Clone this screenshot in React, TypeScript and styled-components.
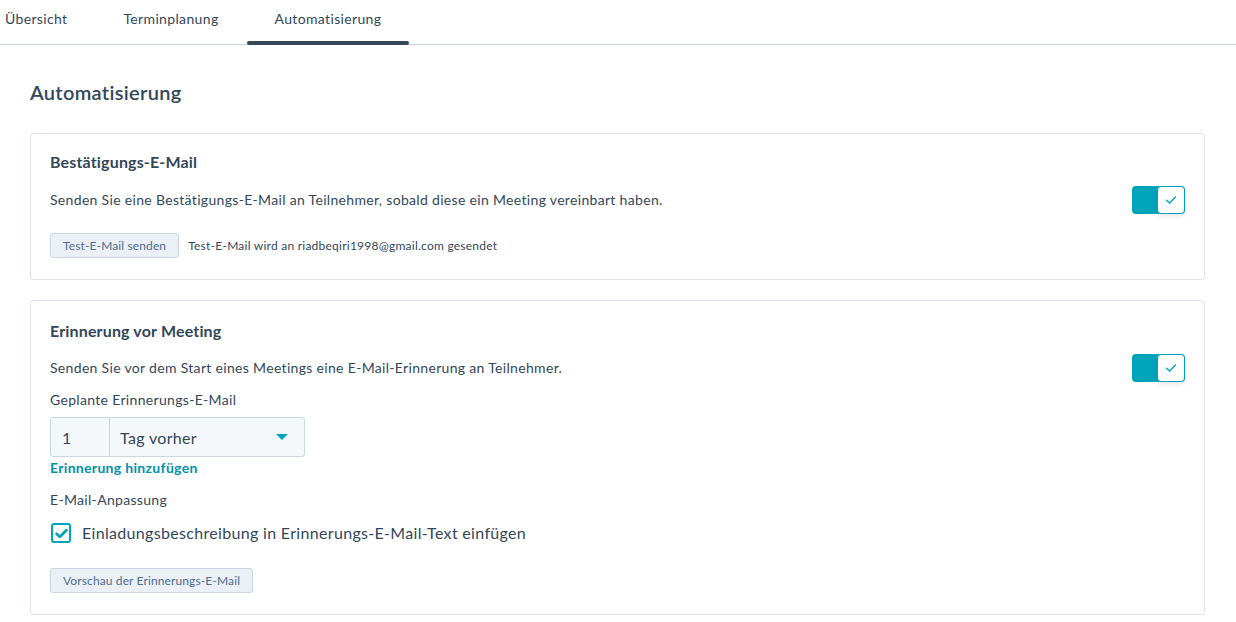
import React from "react";
import styled, { createGlobalStyle } from "styled-components";

const Global = createGlobalStyle`
  html, body { margin: 0; padding: 0; background: #ffffff; }
  body { font-family: "Lato", "Noto Sans", sans-serif; color: #33475b; letter-spacing: 0.02em; -webkit-font-smoothing: antialiased; }
  * { box-sizing: border-box; }
`;

const TabBar = styled.nav`
  display: flex;
  height: 45px;
  border-bottom: 1px solid #cbd6e2;
`;

const Tab = styled.div<{ $active?: boolean; $first?: boolean }>`
  position: relative;
  display: flex;
  align-items: center;
  height: 44px;
  padding: 0 28px 8px ${(p) => (p.$first ? "5px" : "28px")};
  font-size: 14px;
  letter-spacing: 0.025em;
  color: #33475b;
  cursor: pointer;
  &::after {
    content: "";
    display: ${(p) => (p.$active ? "block" : "none")};
    position: absolute;
    left: 0;
    right: 0;
    bottom: -1px;
    height: 4px;
    border-radius: 2px;
    background: #33475b;
  }
`;

const Content = styled.main`
  padding: 0 31px 0 30px;
`;

const PageTitle = styled.h1`
  margin: 34px 0 0;
  font-size: 20px;
  line-height: 26px;
  font-weight: 600;
  color: #33475b;
`;

const Card = styled.section<{ $mt: number; $pt: number }>`
  margin-top: ${(p) => p.$mt}px;
  border: 1px solid #dfe3eb;
  border-radius: 3px;
  padding: ${(p) => p.$pt}px 19px 21px 19px;
`;

const CardTitle = styled.h2`
  margin: 0;
  font-size: 16px;
  line-height: 20px;
  font-weight: 700;
  letter-spacing: 0.01em;
  color: #33475b;
`;

const DescRow = styled.div<{ $mt: number }>`
  display: flex;
  align-items: center;
  justify-content: space-between;
  margin-top: ${(p) => p.$mt}px;
`;

const Desc = styled.p`
  margin: 0;
  font-size: 14px;
  line-height: 20px;
  color: #33475b;
`;

const Toggle = styled.div`
  position: relative;
  width: 53px;
  height: 28px;
  border-radius: 4px;
  background: #00a4bd;
`;

const Knob = styled.div`
  position: absolute;
  right: 0;
  top: 0;
  width: 28px;
  height: 28px;
  border: 1px solid #00a4bd;
  border-radius: 4px;
  background: #fff;
  box-shadow: 0 2px 5px rgba(0, 0, 0, 0.12);
  display: flex;
  align-items: center;
  justify-content: center;
`;

const ButtonRow = styled.div<{ $mt: number }>`
  display: flex;
  align-items: center;
  gap: 9px;
  margin-top: ${(p) => p.$mt}px;
`;

const SmallButton = styled.button`
  height: 25px;
  padding: 0 12px;
  border: 1px solid #cbd6e2;
  border-radius: 3px;
  background: #eaf0f6;
  color: #506e91;
  font-family: inherit;
  font-size: 12px;
  letter-spacing: 0.01em;
  line-height: 23px;
  cursor: pointer;
`;

const Note = styled.span`
  font-size: 12px;
  letter-spacing: 0.02em;
  color: #33475b;
`;

const FieldLabel = styled.div<{ $mt: number }>`
  margin-top: ${(p) => p.$mt}px;
  font-size: 14px;
  line-height: 20px;
  color: #33475b;
`;

const Select = styled.div`
  display: flex;
  width: 255px;
  height: 40px;
  margin-top: 7px;
  border: 1px solid #cbd6e2;
  border-radius: 3px;
  background: #f5f8fa;
  font-size: 16px;
  color: #33475b;
`;

const NumCell = styled.div`
  width: 59px;
  display: flex;
  align-items: center;
  padding-left: 11px;
  border-right: 1px solid #cbd6e2;
`;

const UnitCell = styled.div`
  flex: 1;
  display: flex;
  align-items: center;
  justify-content: space-between;
  padding: 0 16px 0 10px;
`;

const Caret = styled.span`
  width: 0;
  height: 0;
  border-left: 6px solid transparent;
  border-right: 6px solid transparent;
  border-top: 6px solid #00a4bd;
`;

const Link = styled.a`
  display: block;
  margin-top: 1px;
  font-size: 14px;
  line-height: 20px;
  font-weight: 700;
  color: #0091ae;
  text-decoration: none;
`;

const CheckRow = styled.label`
  display: flex;
  align-items: center;
  gap: 11px;
  margin-top: 12px;
  padding-left: 1px;
  font-size: 16px;
  line-height: 22px;
  color: #33475b;
`;

const CheckBox = styled.span`
  width: 20px;
  height: 20px;
  border: 2px solid #00a4bd;
  border-radius: 3px;
  display: flex;
  align-items: center;
  justify-content: center;
  background: #fff;
`;

const Check = ({ size = 12, width = 1.6 }: { size?: number; width?: number }) => (
  <svg width={size} height={size} viewBox="0 0 12 12" fill="none">
    <path d="M1.5 6.3 L4.6 9 L10.5 3" stroke="#00a4bd" strokeWidth={width} strokeLinecap="round" strokeLinejoin="round" />
  </svg>
);

const Switch = () => (
  <Toggle>
    <Knob>
      <Check size={12} width={1.4} />
    </Knob>
  </Toggle>
);

export default function App() {
  return (
    <>
      <Global />
      <TabBar>
        <Tab $first>Übersicht</Tab>
        <Tab>Terminplanung</Tab>
        <Tab $active>Automatisierung</Tab>
      </TabBar>
      <Content>
        <PageTitle>Automatisierung</PageTitle>
        <Card $mt={28} $pt={18}>
          <CardTitle>Bestätigungs-E-Mail</CardTitle>
          <DescRow $mt={14}>
            <Desc>Senden Sie eine Bestätigungs-E-Mail an Teilnehmer, sobald diese ein Meeting vereinbart haben.</Desc>
            <Switch />
          </DescRow>
          <ButtonRow $mt={19}>
            <SmallButton>Test-E-Mail senden</SmallButton>
            <Note>Test-E-Mail wird an riadbeqiri1998@gmail.com gesendet</Note>
          </ButtonRow>
        </Card>
        <Card $mt={20} $pt={20}>
          <CardTitle>Erinnerung vor Meeting</CardTitle>
          <DescRow $mt={13}>
            <Desc>Senden Sie vor dem Start eines Meetings eine E-Mail-Erinnerung an Teilnehmer.</Desc>
            <Switch />
          </DescRow>
          <FieldLabel $mt={8}>Geplante Erinnerungs-E-Mail</FieldLabel>
          <Select>
            <NumCell>1</NumCell>
            <UnitCell>
              <span>Tag vorher</span>
              <Caret />
            </UnitCell>
          </Select>
          <Link href="#">Erinnerung hinzufügen</Link>
          <FieldLabel $mt={12}>E-Mail-Anpassung</FieldLabel>
          <CheckRow>
            <CheckBox>
              <Check size={13} width={2.6} />
            </CheckBox>
            Einladungsbeschreibung in Erinnerungs-E-Mail-Text einfügen
          </CheckRow>
          <ButtonRow $mt={24}>
            <SmallButton>Vorschau der Erinnerungs-E-Mail</SmallButton>
          </ButtonRow>
        </Card>
      </Content>
    </>
  );
}
